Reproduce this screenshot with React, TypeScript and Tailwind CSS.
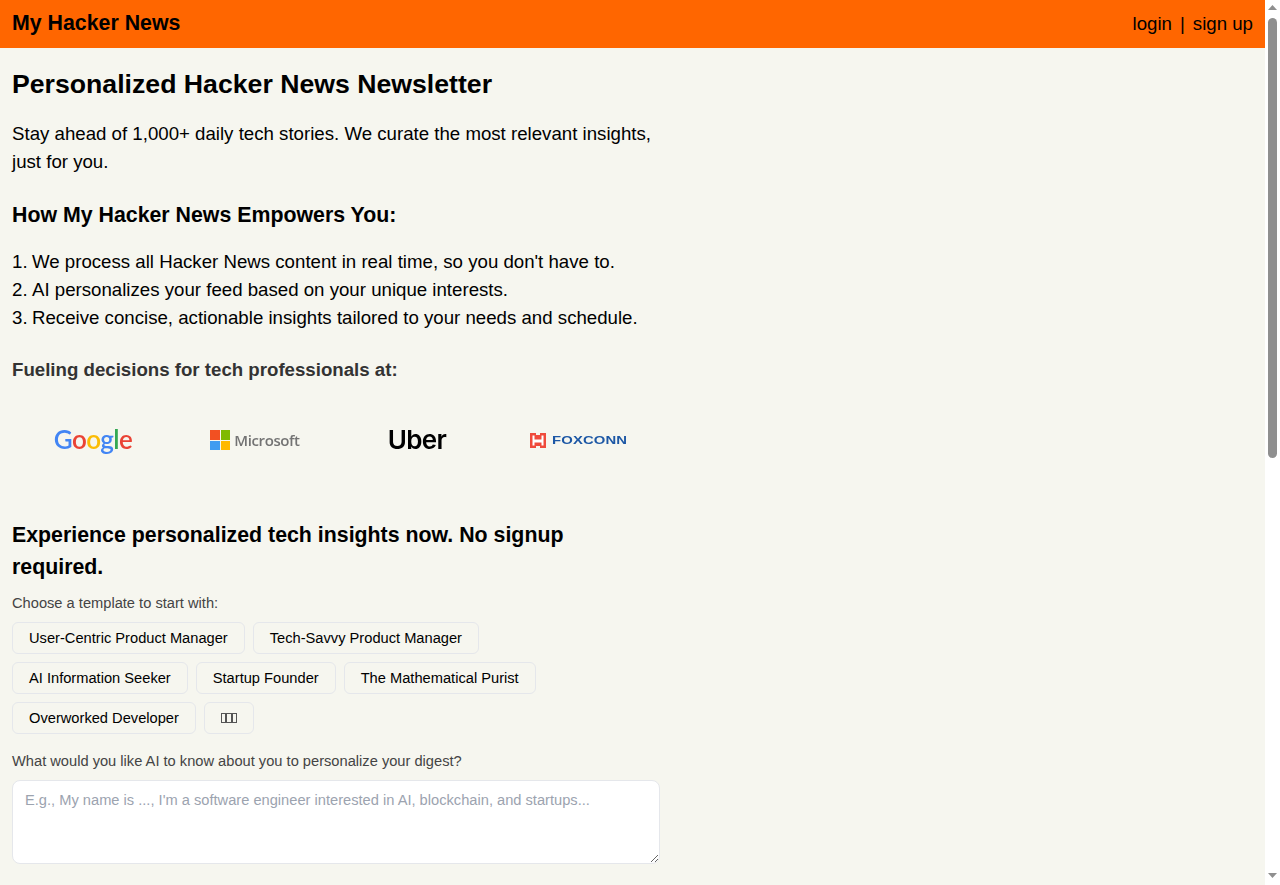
const templates = [
  ["User-Centric Product Manager", "Tech-Savvy Product Manager"],
  ["AI Information Seeker", "Startup Founder", "The Mathematical Purist"],
  ["Overworked Developer"],
];

const steps = [
  "We process all Hacker News content in real time, so you don't have to.",
  "AI personalizes your feed based on your unique interests.",
  "Receive concise, actionable insights tailored to your needs and schedule.",
];

const templateButton =
  "flex h-8 items-center rounded-md border border-[#e5e7eb] px-4 text-[14.67px] leading-none text-black";

function GoogleLogo() {
  const letters: [string, string][] = [
    ["G", "text-[#4285f4]"],
    ["o", "text-[#ea4335]"],
    ["o", "text-[#fbbc05]"],
    ["g", "text-[#4285f4]"],
    ["l", "text-[#34a853]"],
    ["e", "text-[#ea4335]"],
  ];
  return (
    <span className="-mt-[3px] font-['Lato',sans-serif] text-[26px] font-semibold leading-none tracking-[-0.6px] blur-[0.3px]">
      {letters.map(([c, color], i) => (
        <span key={i} className={color}>
          {c}
        </span>
      ))}
    </span>
  );
}

function MicrosoftLogo() {
  return (
    <span className="flex items-center gap-[4px] blur-[0.3px]">
      <span className="grid h-5 w-5 grid-cols-2 gap-[1px]">
        <span className="bg-[#f25022]" />
        <span className="bg-[#7fba00]" />
        <span className="bg-[#3f9cf0]" />
        <span className="bg-[#ffb900]" />
      </span>
      <span className="font-['Open_Sans',sans-serif] text-[15px] font-semibold leading-none tracking-[-0.4px] text-[#737373]">
        Microsoft
      </span>
    </span>
  );
}

function UberLogo() {
  return (
    <span className="font-['Inter',sans-serif] text-[26px] font-semibold leading-none tracking-[-0.7px] text-black blur-[0.3px]">
      Uber
    </span>
  );
}

function FoxconnLogo() {
  return (
    <span className="flex items-center gap-[6px] blur-[0.3px]">
      <svg width="16" height="15" viewBox="0 0 16 15">
        <path fill="#ef4b3c" d="M0 0h6v2h4V0h6v15H10v-2H6v2H0z" />
        <path fill="#fff" d="M2.5 2.5h2v4h7v-4h2v10h-2v-3h-7v3h-2z" />
      </svg>
      <span className="w-[77px] origin-left scale-x-[1.35] font-['Liberation_Sans',sans-serif] text-[11px] font-bold leading-none tracking-[0.1px] text-[#1c57a5]">
        FOXCONN
      </span>
    </span>
  );
}

function Scrollbar() {
  return (
    <aside className="flex w-[15px] shrink-0 flex-col items-center bg-white pb-[7px] pt-[5px]">
      <svg width="9" height="5" viewBox="0 0 9 5">
        <path fill="#8f8f8f" d="M4.5 0L9 5H0z" />
      </svg>
      <div className="mt-[8px] h-[440px] w-[9px] rounded-full bg-[#8f8f8f]" />
      <svg className="mt-auto" width="9" height="5" viewBox="0 0 9 5">
        <path fill="#8f8f8f" d="M0 0h9L4.5 5z" />
      </svg>
    </aside>
  );
}

export default function App() {
  return (
    <div className="flex h-[885px] overflow-hidden bg-[#f6f6ef] font-['Liberation_Sans',Arial,sans-serif] text-black">
      <div className="min-w-0 flex-1">
        <header className="flex h-12 items-center justify-between bg-[#ff6600] px-3 pb-[1px]">
          <a className="text-[21.33px] font-bold">My Hacker News</a>
          <div className="flex items-center gap-2 text-[18.67px]">
            <a>login</a>
            <span>|</span>
            <a>sign up</a>
          </div>
        </header>

        <main className="w-[672px] px-3">
          <h1 className="mt-[18px] text-[26.67px] font-bold leading-9">
            Personalized Hacker News Newsletter
          </h1>
          <p className="mt-[18px] text-[18.67px] leading-7">
            Stay ahead of 1,000+ daily tech stories. We curate the most relevant
            insights, just for you.
          </p>
          <h2 className="mt-[23px] text-[21.33px] font-bold leading-8">
            How My Hacker News Empowers You:
          </h2>
          <ol className="mt-[17px] text-[18.67px] leading-7">
            {steps.map((step, i) => (
              <li key={i} className="flex">
                <span className="w-5 shrink-0">{i + 1}.</span>
                <span>{step}</span>
              </li>
            ))}
          </ol>
          <h3 className="mt-[24px] text-[18.67px] font-bold leading-7 text-[#333333]">
            Fueling decisions for tech professionals at:
          </h3>

          <div className="mt-[16px] grid h-20 grid-cols-4 items-center justify-items-center">
            <GoogleLogo />
            <MicrosoftLogo />
            <UberLogo />
            <FoxconnLogo />
          </div>

          <h2 className="mt-[39px] text-[21.33px] font-bold leading-8">
            Experience personalized tech insights now. No signup required.
          </h2>
          <p className="mt-[8px] text-[14.67px] leading-6 text-[#444444]">
            Choose a template to start with:
          </p>
          <div className="mt-[7px] flex flex-col gap-2">
            {templates.map((row, i) => (
              <div key={i} className="flex gap-2">
                {row.map((t) => (
                  <button key={t} className={templateButton}>
                    {t}
                  </button>
                ))}
                {i === 2 && (
                  <button className={templateButton}>
                    {/* label renders as missing-glyph boxes in the screenshot */}
                    <span className="h-[10px] w-[5.33px] border border-[#555555]" />
                    <span className="h-[10px] w-[5.33px] border border-[#555555]" />
                    <span className="h-[10px] w-[5.33px] border border-[#555555]" />
                  </button>
                )}
              </div>
            ))}
          </div>
          <p className="mt-[15px] text-[14.67px] leading-6 text-[#444444]">
            What would you like AI to know about you to personalize your digest?
          </p>
          <textarea
            className="mt-[7px] block h-[84px] w-full rounded-lg border border-[#e5e7eb] bg-white px-3 py-2 text-[14.67px] leading-[22px] placeholder:text-[#9ca3af]"
            placeholder="E.g., My name is ..., I'm a software engineer interested in AI, blockchain, and startups..."
          />
        </main>
      </div>
      <Scrollbar />
    </div>
  );
}
